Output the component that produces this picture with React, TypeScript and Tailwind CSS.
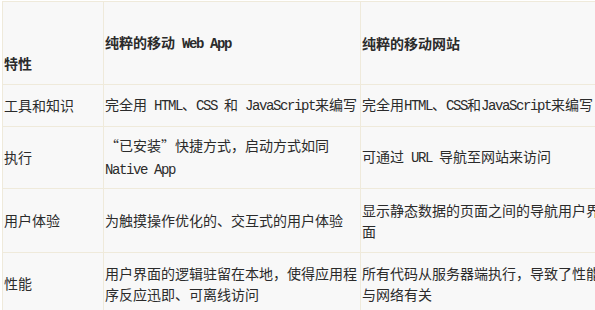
const cjk = "font-['Noto_Sans_CJK_SC',sans-serif]"

function En({ children, bold }: { children: string; bold?: boolean }) {
  return (
    <span
      className={`font-['Liberation_Mono',monospace] tracking-[-1.4px] ${bold ? 'font-bold' : ''}`}
    >
      {children}
    </span>
  )
}

function Cell({
  children,
  className = '',
}: {
  children: React.ReactNode
  className?: string
}) {
  return (
    <div className={`flex items-center bg-[#f8f8f8] px-px ${className}`}>
      <div className="leading-[21px]">{children}</div>
    </div>
  )
}

export default function App() {
  return (
    <div className={`w-[595px] h-[310px] overflow-hidden bg-white ${cjk} text-[14px] text-[#2b2b2b]`}>
      <div className="ml-[2px] mt-px w-fit grid grid-cols-[100px_256px_246px] grid-rows-[82px_41px_61px_63px_61px] gap-px bg-[#efeadb] p-px">
        <Cell className="!items-end pb-[10px] font-bold">特性</Cell>
        <Cell className="font-bold">
          纯粹的移动<En bold> Web App</En>
        </Cell>
        <Cell className="font-bold">纯粹的移动网站</Cell>

        <Cell>工具和知识</Cell>
        <Cell>
          完全用<En> HTML</En>、<En>CSS </En>和<En> JavaScript</En>来编写
        </Cell>
        <Cell>
          完全用<En>HTML</En>、<En>CSS</En>和<En>JavaScript</En>来编写
        </Cell>

        <Cell>执行</Cell>
        <Cell>
          <span className="[font-feature-settings:'fwid']">“已安装”</span>快捷方式，启动方式如同
          <En> Native App</En>
        </Cell>
        <Cell>
          可通过<En> URL </En>导航至网站来访问
        </Cell>

        <Cell>用户体验</Cell>
        <Cell>为触摸操作优化的、交互式的用户体验</Cell>
        <Cell>显示静态数据的页面之间的导航用户界面</Cell>

        <Cell>性能</Cell>
        <Cell>用户界面的逻辑驻留在本地，使得应用程序反应迅即、可离线访问</Cell>
        <Cell>所有代码从服务器端执行，导致了性能与网络有关</Cell>
      </div>
    </div>
  )
}
